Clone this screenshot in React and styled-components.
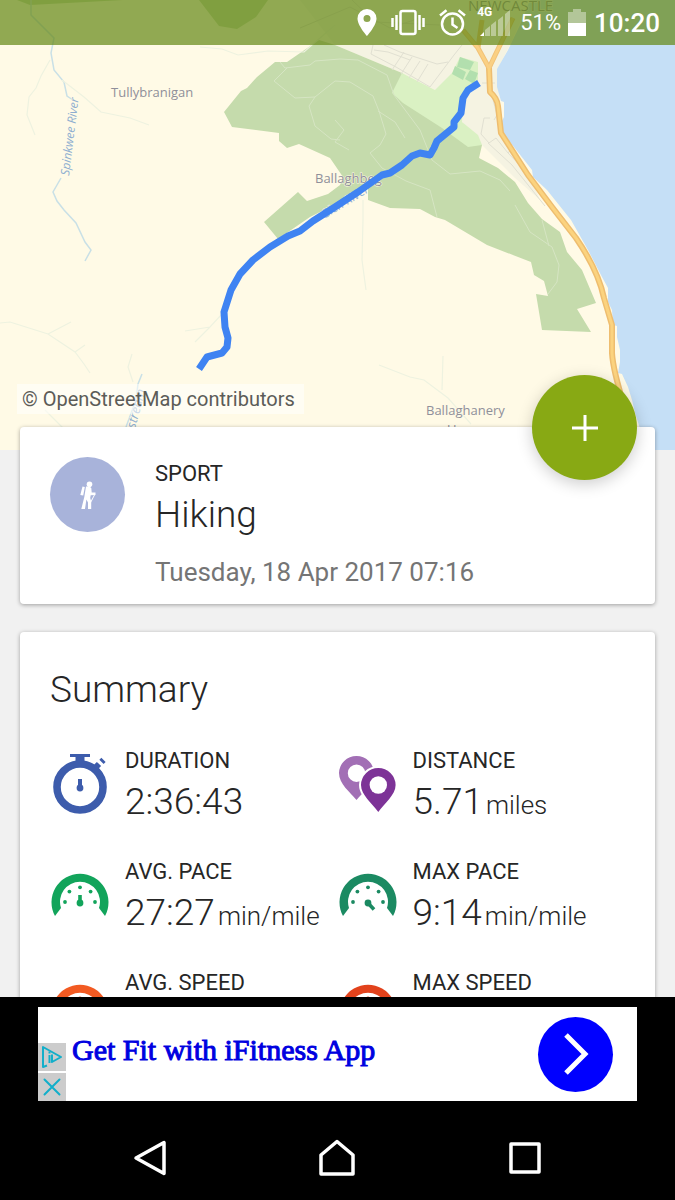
import styled, { createGlobalStyle } from 'styled-components'

const GlobalStyle = createGlobalStyle`
  * {
    box-sizing: border-box;
  }

  body {
    margin: 0;
    background: #000;
    color: #262626;
    font-family: Roboto, 'Liberation Sans', sans-serif;
  }

  button {
    padding: 0;
    border: 0;
    background: none;
    font: inherit;
    cursor: pointer;
  }

  svg {
    display: block;
  }
`

/**
 *
 * Screen structure
 *
 */
const Screen = styled.div`
  display: flex;
  flex-direction: column;
  height: 100vh;
`

const Content = styled.main`
  flex: 1;
  min-height: 0;
  overflow: hidden;
  background: #f1f1f1;
`

/**
 *
 * Map header
 *
 */
const MapHeader = styled.header`
  position: relative;
  height: 450px;

  > svg {
    width: 100%;
    height: 100%;
  }
`

const StatusBar = styled.div`
  position: absolute;
  top: 0;
  left: 0;
  right: 0;
  display: flex;
  align-items: center;
  justify-content: flex-end;
  height: 45px;
  padding-right: 15px;
  background: rgba(98, 134, 18, 0.7);
  color: #fff;
`

const StatusIcons = styled.div`
  display: flex;
  align-items: center;
  gap: 14px;
`

const Signal = styled.div`
  position: relative;

  span {
    position: absolute;
    top: -4px;
    left: -3px;
    font-size: 12px;
    line-height: 14px;
    font-weight: 700;
  }
`

const Battery = styled.div`
  display: flex;
  align-items: center;
  gap: 7px;
  margin: 0 8px;
  font-size: 22px;
`

const Clock = styled.time`
  font-size: 26px;
  font-weight: 500;
`

const Attribution = styled.a`
  position: absolute;
  left: 17px;
  bottom: 36px;
  padding: 0 9px 0 5px;
  background: rgba(255, 255, 255, 0.5);
  color: #5c5c58;
  font-size: 20px;
  line-height: 30px;
  text-decoration: none;
`

/**
 *
 * Cards
 *
 */
const Cards = styled.div`
  position: relative;
  display: flex;
  flex-direction: column;
  gap: 28px;
  margin-top: -23px;
  padding: 0 20px 28px;
`

const Card = styled.section`
  position: relative;
  padding: 30px 30px 16px;
  border-radius: 4px;
  background: #fff;
  box-shadow: 0 1px 4px rgba(0, 0, 0, 0.35);
`

const SportCard = styled(Card)`
  display: flex;
  gap: 30px;
`

const SportIcon = styled.div`
  display: flex;
  align-items: center;
  justify-content: center;
  width: 75px;
  height: 75px;
  border-radius: 50%;
  background: #a8b3da;
`

const AddButton = styled.button`
  position: absolute;
  top: -52px;
  right: 18px;
  display: flex;
  align-items: center;
  justify-content: center;
  width: 105px;
  height: 105px;
  border-radius: 50%;
  background: #88a914;
  box-shadow: 0 4px 16px rgba(0, 0, 0, 0.2);
`

const Label = styled.div`
  font-size: 22px;
  line-height: 34px;
`

const Value = styled.div`
  font-size: 37px;
  line-height: 48px;
  font-weight: 300;
  white-space: nowrap;

  small {
    margin-left: 3px;
    font-size: 26px;
    line-height: 26px;
  }
`

const DateText = styled.div`
  margin-top: 17px;
  color: #757575;
  font-size: 26px;
  line-height: 32px;
`

const Title = styled.h2`
  margin: 0 0 26px;
  font-size: 37px;
  line-height: 56px;
  font-weight: 300;
`

const Stats = styled.div`
  display: grid;
  grid-template-columns: 1fr 1fr;
  row-gap: 29px;
`

const StatItem = styled.div`
  display: flex;
  gap: 15px;

  svg {
    flex: none;
    margin: 9px 0;
  }
`

/**
 *
 * Ad banner
 *
 */
const AdArea = styled.aside`
  padding: 10px 38px 15px;
  background: #000;
`

const Ad = styled.div`
  display: flex;
  height: 94px;
  background: #fff;
`

const AdControls = styled.div`
  display: flex;
  flex-direction: column;
  justify-content: flex-end;
  gap: 2px;

  button {
    display: flex;
    align-items: center;
    justify-content: center;
    width: 28px;
    height: 28px;
    background: #ccc;
  }
`

const AdLink = styled.a`
  flex: 1;
  display: flex;
  align-items: center;
  justify-content: space-between;
  padding: 0 24px 0 6px;
  color: #0000e0;
  text-decoration: none;
`

const AdText = styled.span`
  padding-bottom: 8px;
  font-family: 'Liberation Serif', serif;
  font-size: 30px;
  line-height: 34px;
  -webkit-text-stroke: 1px #0000e0;
`

const AdArrow = styled.span`
  display: flex;
  align-items: center;
  justify-content: center;
  width: 75px;
  height: 75px;
  border-radius: 50%;
  background: #0000ff;
`

const NavBar = styled.nav`
  display: grid;
  grid-template-columns: repeat(3, 1fr);
  height: 84px;
  padding: 0 56px;
  background: #000;

  button {
    display: flex;
    align-items: center;
    justify-content: center;
  }
`

const MapText = styled.text`
  fill: ${(props) => props.$color || '#8f8f9a'};
  stroke: #fffae6;
  stroke-width: 1px;
  paint-order: stroke;
  font-family: 'Open Sans', 'Noto Sans', sans-serif;
  font-size: ${(props) => props.$size || 13}px;
  font-weight: 500;
  font-style: ${(props) => (props.$river ? 'italic' : 'normal')};
`

const route =
  'M479 83L468 90L463 98L461 113L454 122L454 127L437 141L434 148L430 155L420 153L412 156L402 165L390 173L382 175L358 192L335 207L313 221L300 231L288 236L270 247L253 260L240 274L231 290L224 312L225 327L228 338L227 347L222 353L207 357L199 369'

const road =
  'M489 68L490 92Q497 98 498 106L501 133L528 175L552 207L576 238Q598 270 604 298L612 325L612 353Q613 370 624 405L640 450'

const Map = () => (
  <svg viewBox="0 0 675 450" preserveAspectRatio="xMidYMid slice" role="img" aria-label="Route map">
    <rect width="675" height="450" fill="#fffae6" />
    <path fill="#f5f3e2" d="M300 0H530L510 45L497 70L503 130L530 175L540 200L515 178L482 145L435 90L402 73L335 45Z" />
    <path
      fill="#c5dff6"
      d="M530 0L520 25L508 50L497 69L497 87L501 101L504 102V117L501 123L502 132L532 170L533 177L547 190L571 220L588 250L602 277L608 288V302L612 310L613 325L617 326V337L620 350V362L618 373L622 374L628 387L632 400L635 413L647 450H675V0Z"
    />
    <path
      fill="#c5dbac"
      d="M319 40L287 62H275L257 77L247 88L241 91L224 112L232 127L279 133V141L287 148L299 144L330 158L343 177L340 185L328 194L307 201L298 192L264 222L278 239L310 217L340 202L368 187V200L390 208L420 209L435 217L445 220L487 245L531 262L534 275L544 281L548 296L536 294L542 330L591 332L577 309L596 303L582 270L567 252L560 232L542 219L528 203L515 182L498 168L479 158L482 145L402 73L335 45ZM199 0L219 26L237 29L256 17L268 0ZM17 0L30 5L123 0Z"
    />
    <path fill="#daf1c3" d="M402 73L392 93L403 103L442 128L468 147L482 145L478 135L462 122L463 100L478 80L478 62L460 57L452 73L435 90Z" />
    <path fill="#b2dfae" d="M460 57L474 62L470 70L457 67ZM455 66L466 72L463 80L452 74ZM470 70L478 73L474 84L465 79Z" />
    <g fill="none" stroke="#e1e0d2" strokeWidth="1">
      <path d="M373 45L371 54L396 67L430 87L454 55L462 45M384 45L400 52L437 64L448 62M392 70L404 52M401 74L412 57M409 78L420 61M417 82L428 64M374 50L388 52L410 60M482 83H495" />
      <path d="M491 92L497 115L494 120M490 118H484L481 134L489 143L496 138L508 153L533 179L560 215M488 143L512 165L545 206M508 153L512 148" />
      <path d="M300 28L350 7L390 28L420 18M352 0L375 22L440 25" />
    </g>
    <g fill="none" stroke="#d6e5c3" strokeWidth="1">
      <path d="M280 62L285 68L310 65L315 61L340 59L358 60L387 75L394 95L420 130L432 160L450 174L480 171L500 180L510 191" />
      <path d="M287 68L274 81L295 98L315 97L335 81L350 82L373 96L379 111L386 134L380 145L370 153M315 97L309 106L315 126L331 139L340 140M378 111L395 122L405 138" />
      <path d="M335 120L344 130L335 142L349 150M370 153L382 168L406 181L430 190L437 217M515 205L530 232L552 247L559 265L557 282L548 294M542 220L549 246" />
    </g>
    <g fill="none" stroke="#c9e0e6" strokeWidth="1.5">
      <path d="M31 0L31 15L44 28L54 38L51 53L54 70L64 82L67 96L73 100M61 178L53 192L57 201L64 210L76 223L85 242L91 250L85 261" />
      <path d="M142 374L138 384L136 400L126 427" />
    </g>
    <g fill="none" stroke="#eef2e0" strokeWidth="1.2">
      <path d="M50 60L41 76L36 88L29 97L27 115L35 135M62 80L84 97L101 112L130 118L149 125M200 47L222 49L238 55L268 51L304 52L335 25" />
      <path d="M0 323L10 322L48 334L75 352L84 364L90 373M48 334L71 322M75 352L85 345M132 354L128 367L133 382M45 410L65 430" />
      <path d="M222 314L210 327L185 331M210 327L195 342M363 200L363 220L362 260L366 290M379 365L410 377L424 380L448 398L471 424M443 356L442 390" />
    </g>
    <g fill="none" strokeLinejoin="round">
      <path stroke="#f1c176" strokeWidth="5" d="M463 30L478 48L489 68L501 43L513 18M482 20L478 48" />
      <path stroke="#eebd6f" strokeWidth="6" d={road} />
      <path stroke="#fad083" strokeWidth="3" d="M463 30L478 48L489 68L501 43L513 18" />
      <path stroke="#fbd37f" strokeWidth="3" d={road} />
    </g>
    <MapText x="111" y="97">Tullybranigan</MapText>
    <MapText x="315" y="183">Ballaghbeg</MapText>
    <MapText x="426" y="415">Ballaghanery</MapText>
    <MapText x="447" y="434">Upper</MapText>
    <MapText x="468" y="11" $size="15">NEWCASTLE</MapText>
    <MapText $river $color="#8eaed0" $size="12" transform="translate(69 176) rotate(-83)">
      Spinkwee River
    </MapText>
    <MapText $river $color="#8eaed0" $size="12" transform="translate(324 219) rotate(-31)">
      Glen River
    </MapText>
    <MapText $river $color="#8eaed0" transform="translate(135 429) rotate(-75)">
      stream
    </MapText>
    <path fill="none" stroke="#3f83f2" strokeWidth="7" strokeLinejoin="round" d={route} />
  </svg>
)

const PinIcon = () => (
  <svg width="20" height="27" viewBox="0 0 20 27" fill="#fff">
    <path fillRule="evenodd" d="M10 0a9.500 9.500 0 0 0-9.500 9.500C.5 16.500 10 27 10 27s9.500-10.500 9.500-17.500A9.500 9.500 0 0 0 10 0zm0 6a3.500 3.500 0 1 1 0 7 3.500 3.500 0 0 1 0-7z" />
  </svg>
)

const VibrateIcon = () => (
  <svg width="34" height="27" viewBox="0 0 34 27" fill="none" stroke="#fff" strokeWidth="2.500">
    <rect x="9.500" y="2" width="15" height="23" rx="2" />
    <path d="M5.500 6v15M1.500 9v9M28.500 6v15M32.500 9v9" />
  </svg>
)

const AlarmIcon = () => (
  <svg width="27" height="27" viewBox="0 0 27 27" fill="none" stroke="#fff" strokeWidth="2.500">
    <circle cx="13.500" cy="15" r="10.500" />
    <path d="M13.500 8.500v7l5 3.500M1 6.500L7.500 1.200M26 6.500L19.500 1.200" />
  </svg>
)

const SignalIcon = () => (
  <svg width="32" height="27" viewBox="0 0 32 27" fill="#fff">
    <path opacity=".4" d="M5 27V21l5-4v10zM11 27V16l5-4v15zM18 27V11l5-4v20zM25 27V5l5-4v26z" />
    <path d="M0 27h4v-4z" />
  </svg>
)

const BatteryIcon = () => (
  <svg width="18" height="27" viewBox="0 0 18 27" fill="#fff">
    <path opacity=".4" d="M0 3h5V0h8v3h5v11H0z" />
    <path d="M0 14h18v13H0z" />
  </svg>
)

const HikerIcon = () => (
  <svg width="18" height="28" viewBox="0 0 18 28" fill="#fff">
    <circle cx="10.500" cy="3.200" r="2.800" />
    <path d="M3.500 5.500l2.300.5-1.600 8.500-2.900-.6z" />
    <path d="M7 5.500h3.500l1.800 1.500.4 4.500h3.800v2.500l-4.800.3-.5 2.700 1 3.500V28H9v-6.500l-1.600-3L6 28H2.300l3-12z" />
    <path d="M15.200 13.500h1L11.800 22l-.8-.5z" />
  </svg>
)

const StopwatchIcon = () => (
  <svg width="60" height="64" viewBox="0 0 60 64">
    <g fill="none" stroke="#3d5cac">
      <circle cx="30" cy="34" r="23" strokeWidth="7.600" />
      <path strokeWidth="3" d="M20 2.500h20" />
      <path strokeWidth="9" d="M30 3v6" />
      <path strokeWidth="6" d="M45 15l4-4M51.500 8.800l2-2" />
      <path strokeWidth="4" d="M30 26v8" />
    </g>
    <circle cx="30" cy="35" r="3.400" fill="#3d5cac" />
  </svg>
)

const DistanceIcon = () => (
  <svg width="60" height="64" viewBox="0 0 60 64" fillRule="evenodd">
    <path fill="#a26fb5" d="M18.500 3A17.300 17.300 0 0 0 1 20c0 11 11 19 17.500 27C25 39 36 31 36 20A17.300 17.300 0 0 0 18.500 3zm0 8.500a8.700 8.700 0 1 1 0 17.400 8.700 8.700 0 0 1 0-17.400z" />
    <path
      fill="#7d3397"
      stroke="#fff"
      strokeWidth="4"
      paintOrder="stroke"
      d="M40.300 15A17.300 17.300 0 0 0 23 32c0 10 11 18 17.300 27C46.500 50 57.600 42 57.600 32A17.300 17.300 0 0 0 40.300 15z"
    />
    <circle cx="40.300" cy="32" r="8.700" fill="#fff" />
  </svg>
)

/**
 *
 * Gauge icon
 *
 * @param {string} color - Dial and needle color
 * @param {boolean} max - Points the needle to the end of the dial
 */
const GaugeIcon = ({ color, max }) => (
  <svg width="60" height="64" viewBox="0 0 60 64" fill={color}>
    <path d="M5 52A28.500 28.500 0 1 1 55 52L49 44A20 20 0 1 0 11 44Z" />
    <circle cx="15" cy="38" r="1.900" />
    <circle cx="19.400" cy="27.600" r="1.900" />
    <circle cx="30" cy="23.300" r="1.900" />
    <circle cx="40.600" cy="27.600" r="1.900" />
    <circle cx="45" cy="38" r="1.900" />
    <circle cx="30" cy="39" r="3.400" />
    <path stroke={color} strokeWidth="3.600" d={max ? 'M30 39l6 6.500' : 'M30 39v-8'} />
  </svg>
)

const stats = [
  { label: 'DURATION', value: '2:36:43', icon: <StopwatchIcon /> },
  { label: 'DISTANCE', value: '5.71', unit: 'miles', icon: <DistanceIcon /> },
  { label: 'AVG. PACE', value: '27:27', unit: 'min/mile', icon: <GaugeIcon color="#12a45b" /> },
  { label: 'MAX PACE', value: '9:14', unit: 'min/mile', icon: <GaugeIcon color="#1b8a62" max /> },
  { label: 'AVG. SPEED', icon: <GaugeIcon color="#f25a22" /> },
  { label: 'MAX SPEED', icon: <GaugeIcon color="#e2421c" max /> }
]

/**
 *
 * Single summary entry
 *
 * @param {string} label - Name of the measure
 * @param {string} value - Measured value
 * @param {string} unit - Unit shown after the value
 * @param {node} icon - Icon on the left
 */
const Stat = ({ label, value, unit, icon }) => (
  <StatItem>
    {icon}
    <div>
      <Label>{label}</Label>
      {value && (
        <Value>
          {value}
          {unit && <small>{unit}</small>}
        </Value>
      )}
    </div>
  </StatItem>
)

export default function App() {
  return (
    <Screen>
      <GlobalStyle />
      <Content>
        <MapHeader>
          <Map />
          <StatusBar>
            <StatusIcons>
              <PinIcon />
              <VibrateIcon />
              <AlarmIcon />
              <Signal>
                <span>4G</span>
                <SignalIcon />
              </Signal>
            </StatusIcons>
            <Battery>
              51%
              <BatteryIcon />
            </Battery>
            <Clock>10:20</Clock>
          </StatusBar>
          <Attribution href="#copyright">© OpenStreetMap contributors</Attribution>
        </MapHeader>

        <Cards>
          <SportCard>
            <SportIcon>
              <HikerIcon />
            </SportIcon>
            <div>
              <Label>SPORT</Label>
              <Value>Hiking</Value>
              <DateText>Tuesday, 18 Apr 2017 07:16</DateText>
            </div>
            <AddButton aria-label="Add">
              <svg width="28" height="28" viewBox="0 0 28 28" stroke="#fff" strokeWidth="3">
                <path d="M14 1v26M1 14h26" />
              </svg>
            </AddButton>
          </SportCard>

          <Card>
            <Title>Summary</Title>
            <Stats>
              {stats.map((stat) => (
                <Stat key={stat.label} {...stat} />
              ))}
            </Stats>
          </Card>
        </Cards>
      </Content>

      <AdArea>
        <Ad>
          <AdControls>
            <button aria-label="Ad choices">
              <svg width="22" height="24" viewBox="0 0 22 24" fill="none" stroke="#12afca" strokeWidth="2">
                <path strokeLinejoin="round" d="M6 20.500l-4 1.500V2L20 12l-9 5V9.500" />
                <path d="M8.500 10v8M8.500 6.500v2" />
              </svg>
            </button>
            <button aria-label="Close ad">
              <svg width="18" height="18" viewBox="0 0 18 18" stroke="#12afca" strokeWidth="2">
                <path strokeLinecap="round" d="M1.500 1.500l15 15M16.500 1.500l-15 15" />
              </svg>
            </button>
          </AdControls>
          <AdLink href="#ifitness">
            <AdText>Get Fit with iFitness App</AdText>
            <AdArrow>
              <svg width="26" height="42" viewBox="0 0 26 42" fill="none" stroke="#fff" strokeWidth="5">
                <path d="M3 2l19 19L3 40" />
              </svg>
            </AdArrow>
          </AdLink>
        </Ad>
      </AdArea>

      <NavBar>
        <button aria-label="Back">
          <svg width="34" height="36" viewBox="0 0 34 36" fill="none" stroke="#fff" strokeWidth="3.500" strokeLinejoin="round">
            <path d="M31 2.500v31L3 18z" />
          </svg>
        </button>
        <button aria-label="Home">
          <svg width="38" height="38" viewBox="0 0 38 38" fill="none" stroke="#fff" strokeWidth="3.500" strokeLinejoin="round">
            <path d="M19 2.500L35 16v19H3V16z" />
          </svg>
        </button>
        <button aria-label="Recent apps">
          <svg width="32" height="32" viewBox="0 0 32 32" fill="none" stroke="#fff" strokeWidth="3.500" strokeLinejoin="round">
            <path d="M2 2h28v28H2z" />
          </svg>
        </button>
      </NavBar>
    </Screen>
  )
}
